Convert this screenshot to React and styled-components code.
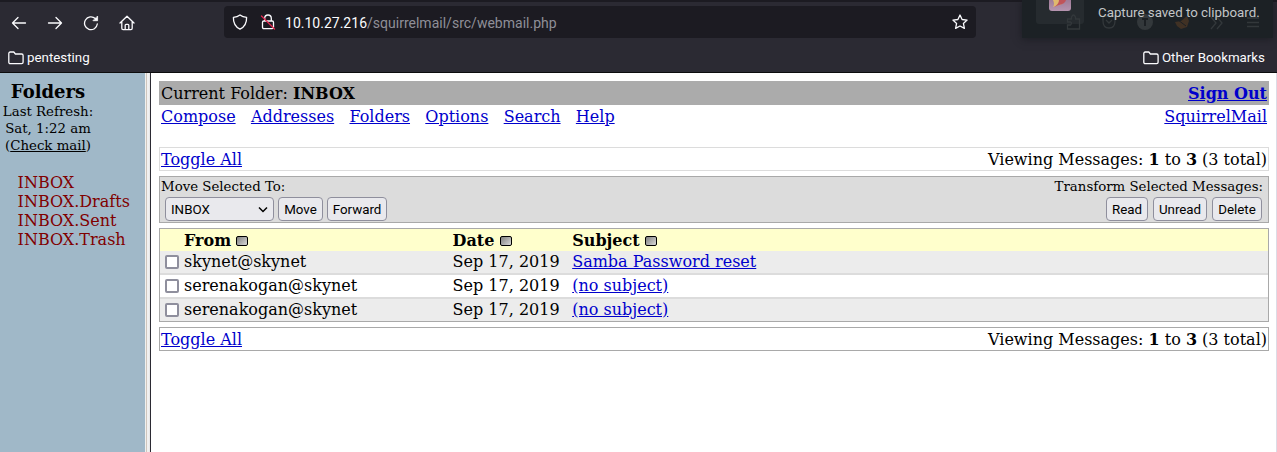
import React from "react";
import styled, { createGlobalStyle } from "styled-components";

const Global = createGlobalStyle`
  *{box-sizing:border-box}
  body{margin:0;background:#fff;overflow:hidden}
`;
const Window = styled.div`
  width:1277px;height:452px;display:flex;flex-direction:column;position:relative;overflow:hidden;
  font:16px/19px "DejaVu Serif",serif;color:#000;
`;
const Chrome = styled.header`
  flex:none;height:73px;background:#2b2a33;border-top:2px solid #1c1b22;border-bottom:1px solid #0c0c0d;
  font-family:Roboto,sans-serif;color:#fbfbfe;
`;
const NavBar = styled.div`
  height:40px;padding:4px 0 0 11px;display:flex;align-items:flex-start;
`;
const NavButtons = styled.div`
  display:flex;gap:20px;padding-top:9px;width:213px;
`;
const Icon = styled.svg`
  display:block;flex:none;width:16px;height:16px;fill:none;stroke:#fbfbfe;margin-left:${p => p.$shift || 0}px;
  stroke-width:1.3;stroke-linecap:round;stroke-linejoin:round;
`;
const AddressBar = styled.div`
  width:752px;height:32px;border-radius:4px;background:#1c1b22;display:flex;align-items:center;padding:0 8px;
`;
const Url = styled.div`
  flex:1;margin-left:9px;padding-top:2px;font-size:14px;letter-spacing:.01px;line-height:20px;color:#8f8f98;white-space:nowrap;
  b{font-weight:400;color:#fbfbfe}
`;
const Bookmarks = styled.div`
  height:30px;padding:2px 12px 0 8px;display:flex;justify-content:space-between;align-items:center;
`;
const Bookmark = styled.div`
  display:flex;align-items:center;gap:3px;font-size:13.33px;line-height:16px;
`;
const Toast = styled.div`
  position:absolute;left:1022px;top:0;width:251px;height:38px;background:#1c2125;
  box-shadow:0 1px 8px rgba(20,22,26,.65);font:13.3px/16px Roboto,sans-serif;color:#c3c6c8;
`;
const ToastIcon = styled.div`
  position:absolute;left:14px;top:0;width:48px;height:24px;background:#262b2f;border-radius:0 0 3px 3px;
`;
const ToastText = styled.div`
  position:absolute;left:76px;top:5px;white-space:nowrap;
`;
const FaintIcons = styled.svg`
  position:absolute;left:0;top:0;width:251px;height:38px;
`;
const Page = styled.div`flex:1;display:flex;min-height:0;`;
const Sidebar = styled.aside`
  width:145px;background:#a0b8c8;padding-top:8px;flex:none;
`;
const SidebarHead = styled.div`
  width:96px;text-align:center;font-size:13.33px;line-height:17px;
  h1{margin:0;font-size:18px;line-height:22px}
  u{text-decoration-thickness:1px}
`;
const FolderList = styled.nav`
  margin:19px 0 0 17.6px;color:#800000;display:flex;flex-direction:column;
`;
const Divider = styled.div`
  width:6px;flex:none;background:linear-gradient(90deg,#f0f0ee 0 1px,#cfc6bd 1px 2px,#f0f0f0 2px 4px,#e8e8e8 4px 5px,#2b2a33 5px);
`;
const Main = styled.main`flex:1;padding:8px 7px 0 8px;border-right:1px solid #dcdce6;`;
const Bar = styled.div`
  display:flex;justify-content:space-between;align-items:center;height:24px;padding:0 2px;
  background:${p => p.$bg || "#fff"};
  border:${p => (p.$line ? `1px solid ${p.$line}` : "0")};
  ${p => p.$line && "padding:0 1px;"}
  margin-top:${p => p.$top || 0}px;
`;
const MenuBar = styled(Bar)`height:22px;`;
const Link = styled.a`color:#0000cc;text-decoration:underline;`;
const Menu = styled.nav`display:flex;gap:15.3px;`;
const Actions = styled.div`
  height:47px;margin-top:5px;background:#dcdcdc;border:1px solid #a9a9a9;display:flex;justify-content:space-between;
  padding:1px 5px 0 1px;font-size:13.33px;line-height:17px;
`;
const ActionGroup = styled.div`text-align:${p => p.$align || "left"};`;
const Buttons = styled.div`
  display:flex;gap:${p => p.$gap}px;padding:0 ${p => p.$outdent || 0}px 0 ${p => p.$indent || 0}px;margin-top:2px;justify-content:flex-end;
`;
const Button = styled.button`
  height:24px;width:${p => p.$w}px;padding:1px 0 0;border:1px solid #8f8f9d;border-radius:4px;background:#e9e9ed;color:#000;
  font:13.33px/17px Roboto,sans-serif;display:flex;align-items:center;justify-content:center;
`;
const Select = styled(Button)`justify-content:space-between;padding:1px 5px 0;`;
const Messages = styled.section`margin-top:5px;border:1px solid #a9a9a9;`;
const Row = styled.div`
  display:grid;grid-template-columns:24px 268.6px 119.6px 1fr;align-items:center;height:22px;background:${p => p.$bg};
  ${p => p.$head && "font-weight:700;"}
`;
const Cell = styled.span`padding-bottom:2px;`;
const Rule = styled.div`height:2px;background:#dcdcdc;`;
const Check = styled.span`
  width:14px;height:14px;margin-left:5px;border:2px solid #8f8f9d;border-radius:2px;background:#fff;
`;
const Sort = styled.span`
  display:inline-block;width:12px;height:10px;margin-left:5.3px;border:1px solid #000;border-radius:2px;
  background:linear-gradient(135deg,#808080,#d8d8d8);vertical-align:0;
`;

const Folder = () => (
  <Icon viewBox="0 0 16 16"><path d="M2.200 2h3.600l1.600 2h6.200c1 0 1.500.6 1.500 1.500v6.800c0 .9-.6 1.400-1.500 1.400H2.200c-.8 0-1.400-.5-1.400-1.400V3.400C.8 2.500 1.400 2 2.200 2z" /></Icon>
);
const Pager = ({ line, top }) => (
  <Bar $line={line} $top={top}>
    <Link>Toggle All</Link>
    <span>Viewing Messages: <b>1</b> to <b>3</b> (3 total)</span>
  </Bar>
);
const mails = [
  ["skynet@skynet", "Samba Password reset"],
  ["serenakogan@skynet", "(no subject)"],
  ["serenakogan@skynet", "(no subject)"],
];

export default function App() {
  return (
    <Window>
      <Global />
      <Chrome>
        <NavBar>
          <NavButtons>
            <Icon viewBox="0 0 16 16"><path d="M14.500 8H1.500M7 2.500 1.500 8 7 13.500" /></Icon>
            <Icon viewBox="0 0 16 16"><path d="M1.500 8h13M9 2.500 14.500 8 9 13.500" /></Icon>
            <Icon viewBox="0 0 16 16"><path d="M14.300 9A6.400 6.400 0 1 1 12.300 3.600" /><path d="M14.600 1.400v4.300h-4.300z" fill="#fbfbfe" strokeWidth=".8" /></Icon>
            <Icon viewBox="0 0 16 16"><path d="M1 8 8 1.300 15 8M2.800 6.600v6.700c0 .8.500 1.300 1.300 1.300h7.800c.8 0 1.300-.5 1.300-1.300V6.600M6.200 14.500v-4.200c0-.6.3-.9.9-.9h1.800c.6 0 .9.300.9.900v4.200" /></Icon>
          </NavButtons>
          <AddressBar>
            <Icon viewBox="0 0 16 16"><path d="M8 .9c1.900 1.500 4 2.200 6.600 2.400C14.800 8.700 13 12.800 8 15.200 3 12.800 1.200 8.700 1.400 3.300 4 3.100 6.100 2.400 8 .9z" /></Icon>
            <Icon viewBox="0 0 16 16" $shift={12}><path d="M4.700 7V4.300a3.300 3.300 0 0 1 6.600 0V7M3.800 7h8.400c.9 0 1.300.5 1.300 1.300v5c0 .8-.5 1.300-1.300 1.300H3.800c-.8 0-1.300-.5-1.300-1.300v-5C2.500 7.500 3 7 3.800 7z" /><path d="M1.500 2 14.500 15" stroke="#e22850" /></Icon>
            <Url><b>10.10.27.216</b>/squirrelmail/src/webmail.php</Url>
            <Icon viewBox="0 0 16 16"><path d="m8 1 2.100 4.500 5 .6-3.700 3.300 1 5L8 12l-4.400 2.400 1-5L.9 6.100l5-.6z" /></Icon>
          </AddressBar>
        </NavBar>
        <Bookmarks>
          <Bookmark><Folder />pentesting</Bookmark>
          <Bookmark><Folder />Other Bookmarks</Bookmark>
        </Bookmarks>
      </Chrome>
      <Toast>
        <ToastIcon />
        <FaintIcons viewBox="0 0 251 38">
          <defs><linearGradient id="tile" x2="0" y2="1"><stop stopColor="#a07c98" /><stop offset="1" stopColor="#b695b0" /></linearGradient></defs>
          <path d="M27 0h22v8q0 3-3 3H30q-3 0-3-3z" fill="url(#tile)" />
          <path d="M31 0h12q-1 4-6 5l-6 2q2-3 0-7z" fill="#e0b96e" /><path d="M37 0h7q-1 4-7 5l-5 2q5-3 5-7z" fill="#c0545a" />
          <g fill="none" stroke="#33383b" strokeWidth="1.300">
            <path d="M42 19h4v-2q2-4 4 0v2h4v10H42v-4h3q2-2 0-3h-3z" transform="translate(3.500 0)" />
            <path d="M81 16h12v5q0 7-6 7t-6-7zM84 20l3 3 3-3M189 17l5 6-5 6M195 17l5 6-5 6M225 18h12M225 22.500h12M225 26.500h12" />
          </g>
          <circle cx="123" cy="22" r="8" fill="#33383b" /><path d="M120 19h6M123 19v7" stroke="#1c2024" strokeWidth="2" />
          <path d="m153 22 6-1 6-5 2 5-2 6-6 2-4-3z" fill="#403124" /><path d="m156 20 8 6" stroke="#1c2024" />
        </FaintIcons>
        <ToastText>Capture saved to clipboard.</ToastText>
      </Toast>
      <Page>
        <Sidebar>
          <SidebarHead>
            <h1>Folders</h1>
            <div>Last Refresh:</div><div>Sat, 1:22 am</div><div>(<u>Check mail</u>)</div>
          </SidebarHead>
          <FolderList>
            {["INBOX", "INBOX.Drafts", "INBOX.Sent", "INBOX.Trash"].map(f => <span key={f}>{f}</span>)}
          </FolderList>
        </Sidebar>
        <Divider />
        <Main>
          <Bar $bg="#ababab"><span>Current Folder: <b>INBOX</b></span><Link><b>Sign Out</b></Link></Bar>
          <MenuBar>
            <Menu>{["Compose", "Addresses", "Folders", "Options", "Search", "Help"].map(m => <Link key={m}>{m}</Link>)}</Menu>
            <Link>SquirrelMail</Link>
          </MenuBar>
          <Pager line="#dcdcdc" top={20} />
          <Actions>
            <ActionGroup>
              Move Selected To:
              <Buttons $gap={4} $indent={4}>
                <Select $w={109}>INBOX<svg width="10" height="8" viewBox="0 0 10 8"><path d="m1 1.500 4 4L9 1.500" fill="none" stroke="#000" strokeWidth="1.500" /></svg></Select>
                <Button $w={45}>Move</Button><Button $w={60}>Forward</Button>
              </Buttons>
            </ActionGroup>
            <ActionGroup $align="right">
              Transform Selected Messages:
              <Buttons $gap={5} $outdent={1}><Button $w={42}>Read</Button><Button $w={54}>Unread</Button><Button $w={50}>Delete</Button></Buttons>
            </ActionGroup>
          </Actions>
          <Messages>
            <Row $head $bg="#ffffcc"><span />{["From", "Date", "Subject"].map(h => <span key={h}>{h}<Sort /></span>)}</Row>
            {mails.map(([from, subject], i) => (
              <React.Fragment key={i}>
                {i > 0 && <Rule />}
                <Row $bg={i % 2 ? "#fff" : "#ececec"}><Check /><Cell>{from}</Cell><Cell>Sep 17, 2019</Cell><Cell><Link>{subject}</Link></Cell></Row>
              </React.Fragment>
            ))}
          </Messages>
          <Pager line="#a9a9a9" top={5} />
        </Main>
      </Page>
    </Window>
  );
}
